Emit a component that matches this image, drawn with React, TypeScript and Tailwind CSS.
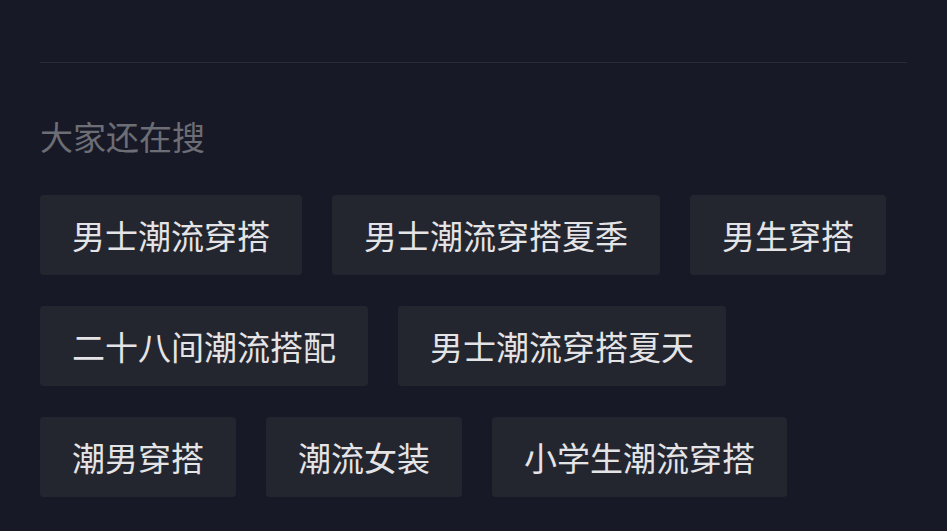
import React from "react";

const rows = [
  ["男士潮流穿搭", "男士潮流穿搭夏季", "男生穿搭"],
  ["二十八间潮流搭配", "男士潮流穿搭夏天"],
  ["潮男穿搭", "潮流女装", "小学生潮流穿搭"],
];

export default function App() {
  return (
    <div
      className="w-[947px] h-[531px] overflow-hidden bg-[#181926] px-10 pt-[62px]"
      style={{ fontFamily: '"Noto Sans CJK SC", "Noto Sans", sans-serif' }}
    >
      <div className="h-px bg-[#2a2b37]" />
      <div className="mt-[57px] text-[33px] leading-[33px] text-[#6c6d75]">大家还在搜</div>
      <div className="mt-[42px] flex flex-col gap-[31px]">
        {rows.map((row, i) => (
          <div key={i} className="flex gap-[30px]">
            {row.map((t) => (
              <div
                key={t}
                className="h-[80px] flex items-center px-8 rounded-[4px] bg-[#24262f] text-[33px] leading-none text-[#e4e4e7] whitespace-nowrap"
              >
                {t}
              </div>
            ))}
          </div>
        ))}
      </div>
    </div>
  );
}
